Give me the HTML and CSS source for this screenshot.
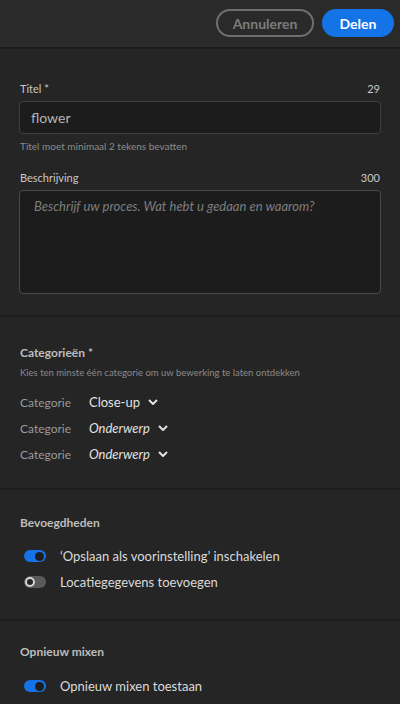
FILE: index.html
```html
<!DOCTYPE html>
<html lang="nl">
<head>
<meta charset="utf-8">
<link rel="stylesheet" href="styles.css">
</head>
<body>
<header class="topbar">
  <button class="btn btn-secondary">Annuleren</button>
  <button class="btn btn-primary">Delen</button>
</header>
<main>
  <section class="section fields">
    <div class="field-head"><span>Titel *</span><span>29</span></div>
    <div class="input">flower</div>
    <div class="help">Titel moet minimaal 2 tekens bevatten</div>
    <div class="field-head second"><span>Beschrijving</span><span>300</span></div>
    <div class="textarea">Beschrijf uw proces. Wat hebt u gedaan en waarom?</div>
  </section>
  <section class="section cats">
    <h2 class="title">Categorieën *</h2>
    <div class="sub">Kies ten minste één categorie om uw bewerking te laten ontdekken</div>
    <div class="cat-list">
      <div class="cat-row"><span class="cat-label">Categorie</span><span class="cat-value">Close-up</span><svg class="chev" viewBox="0 0 10 6"><path d="M1 1l4 4 4-4" /></svg></div>
      <div class="cat-row"><span class="cat-label">Categorie</span><span class="cat-value italic">Onderwerp</span><svg class="chev" viewBox="0 0 10 6"><path d="M1 1l4 4 4-4" /></svg></div>
      <div class="cat-row"><span class="cat-label">Categorie</span><span class="cat-value italic">Onderwerp</span><svg class="chev" viewBox="0 0 10 6"><path d="M1 1l4 4 4-4" /></svg></div>
    </div>
  </section>
  <section class="section perms">
    <h2 class="title">Bevoegdheden</h2>
    <div class="toggles">
      <div class="toggle-row"><span class="toggle on"></span><span>‘Opslaan als voorinstelling’ inschakelen</span></div>
      <div class="toggle-row"><span class="toggle"></span><span>Locatiegegevens toevoegen</span></div>
    </div>
  </section>
  <section class="section remix">
    <h2 class="title">Opnieuw mixen</h2>
    <div class="toggles">
      <div class="toggle-row"><span class="toggle on"></span><span>Opnieuw mixen toestaan</span></div>
    </div>
  </section>
</main>
</body>
</html>
```
FILE: styles.css
```css
* { box-sizing: border-box; }
html, body { margin: 0; padding: 0; }
body {
  background: #252525;
  font-family: "Lato", "Noto Sans", sans-serif;
  color: #c8c8c8;
  width: 400px;
  height: 704px;
  overflow: hidden;
}
.topbar {
  height: 49px;
  background: #2a2a2a;
  display: flex;
  justify-content: flex-end;
  align-items: center;
  gap: 8px;
  padding-right: 6px;
  padding-bottom: 1px;
  border-bottom: 2px solid #1c1c1c;
}
.btn {
  height: 28px;
  border-radius: 14px;
  font-family: inherit;
  font-weight: 700;
  font-size: 14px;
  padding: 0;
}
.btn-secondary {
  width: 98px;
  background: transparent;
  border: 2px solid #6f6f6f;
  color: #7c7c7c;
}
.btn-primary {
  width: 72px;
  background: #1473e6;
  border: none;
  color: #ffffff;
}
.section {
  border-bottom: 2px solid #1e1e1e;
  padding: 0 19px;
}
.fields { padding-top: 33px; padding-bottom: 21px; }
.field-head {
  display: flex;
  justify-content: space-between;
  font-size: 11px;
  color: #c8c8c8;
  line-height: 14px;
  padding: 0 1px 5px;
}
.field-head.second { margin-top: 18px; }
.input {
  height: 33px;
  background: #1c1c1c;
  border: 1px solid #3e3e3e;
  border-radius: 4px;
  padding: 0 11px;
  font-size: 14px;
  line-height: 31px;
  color: #b5b5b5;
}
.help {
  font-size: 10px;
  color: #8c8c8c;
  margin-top: 6px;
  padding-left: 1px;
  line-height: 13px;
}
.textarea {
  height: 104px;
  background: #1c1c1c;
  border: 1px solid #4a4a4a;
  border-radius: 4px;
  padding: 7px 14px;
  font-size: 13px;
  font-style: italic;
  color: #7e7e7e;
}
.title {
  margin: 0;
  font-size: 12px;
  font-weight: 700;
  color: #bdbdbd;
  line-height: 16px;
  padding-left: 1px;
}
.cats { padding-top: 28px; padding-bottom: 25px; }
.sub {
  font-size: 9.5px;
  color: #8a8a8a;
  margin-top: 6px;
  padding-left: 1px;
  line-height: 12px;
}
.cat-list { margin-top: 14px; display: flex; flex-direction: column; gap: 8px; }
.cat-row { display: flex; align-items: center; height: 18px; padding-left: 1px; }
.cat-label { width: 69px; font-size: 12px; color: #9a9a9a; }
.cat-value { font-size: 13px; color: #e2e2e2; }
.cat-value.italic { font-style: italic; }
.chev { width: 10px; height: 6px; margin-left: 8px; fill: none; stroke: #e2e2e2; stroke-width: 2; }
.perms { padding-top: 25px; padding-bottom: 28px; }
.remix { padding-top: 23px; border-bottom: none; }
.toggles { margin-top: 16px; display: flex; flex-direction: column; gap: 8px; }
.remix .toggles { margin-top: 17px; }
.toggle-row { display: flex; align-items: center; height: 18px; font-size: 13px; color: #dadada; }
.toggle {
  position: relative;
  width: 22px;
  height: 12px;
  border-radius: 6px;
  background: #5a5a5a;
  margin: 0 14px 0 5px;
}
.toggle::after {
  content: "";
  position: absolute;
  top: 1px;
  left: 1px;
  width: 10px;
  height: 10px;
  border-radius: 50%;
  background: #252525;
  box-shadow: 0 0 0 2px #d8d8d8 inset;
}
.toggle.on { background: #1473e6; }
.toggle.on::after { left: 11px; background: #1d1d1d; box-shadow: none; width: 9px; height: 9px; top: 1.5px; }
```
